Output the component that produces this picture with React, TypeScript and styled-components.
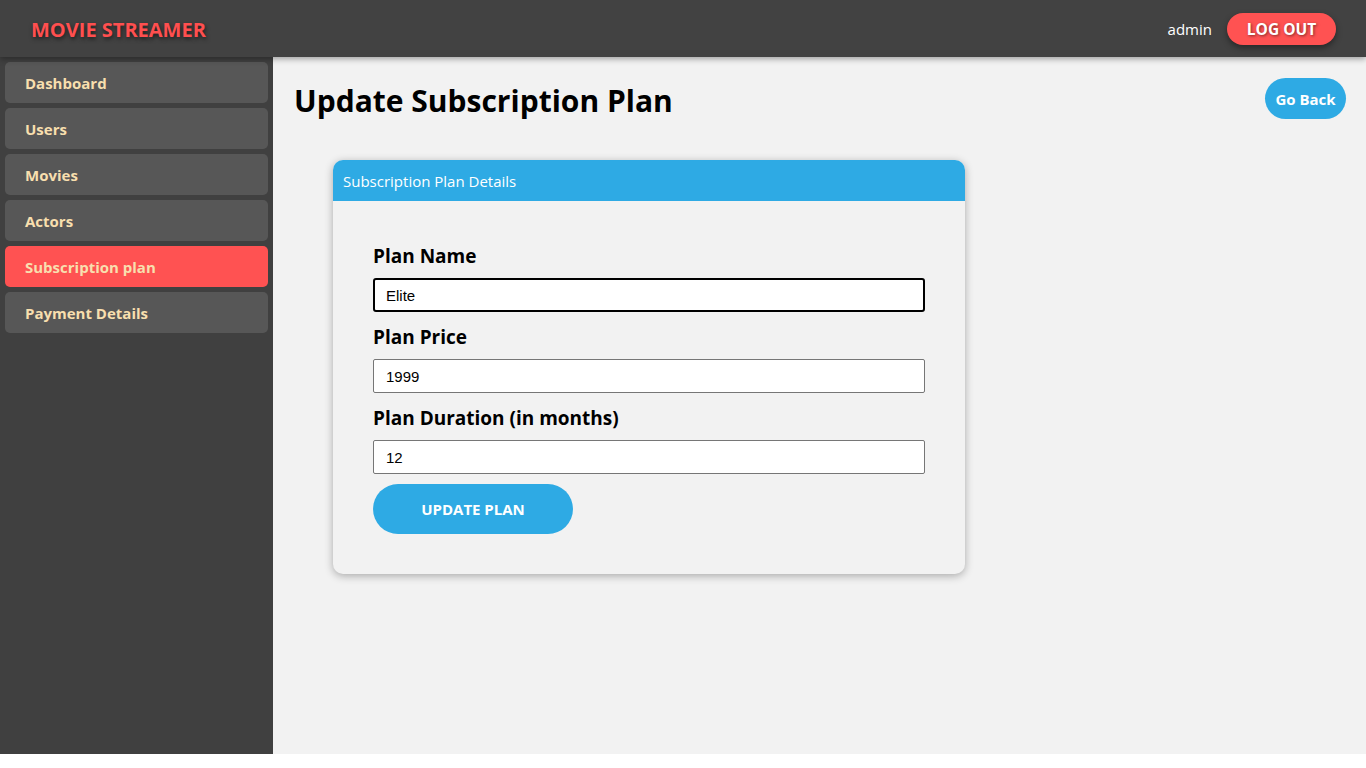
import React from "react";
import styled, { createGlobalStyle } from "styled-components";

const Global = createGlobalStyle`
  html, body { margin: 0; padding: 0; background: #ffffff; }
  body { font-family: "Open Sans", "Lato", sans-serif; }
  * { box-sizing: border-box; }
`;

const Page = styled.div`
  height: 754px;
  display: flex;
  flex-direction: column;
`;

const Header = styled.header`
  height: 57px;
  flex-shrink: 0;
  background: #424242;
  display: flex;
  align-items: center;
  justify-content: space-between;
  padding: 0 30px 0 31px;
  box-shadow: 0 2px 6px rgba(0, 0, 0, 0.35);
  position: relative;
  z-index: 2;
`;

const Logo = styled.div`
  color: #ff4f4f;
  font-weight: 700;
  font-size: 20px;
  padding-top: 2px;
  text-shadow: 1px 2px 4px rgba(0, 0, 0, 0.6);
`;

const HeaderRight = styled.div`
  display: flex;
  align-items: center;
  gap: 15px;
`;

const UserName = styled.span`
  color: #ffffff;
  font-size: 15px;
`;

const LogoutButton = styled.button`
  width: 109px;
  height: 32px;
  border: none;
  border-radius: 16px;
  background: #ff5252;
  color: #ffffff;
  font-family: inherit;
  font-weight: 700;
  font-size: 15.5px;
  text-shadow: 1px 1px 3px rgba(0, 0, 0, 0.5);
  box-shadow: 0 3px 6px rgba(0, 0, 0, 0.4);
`;

const Body = styled.div`
  flex: 1;
  display: flex;
  min-height: 0;
`;

const Sidebar = styled.nav`
  width: 273px;
  flex-shrink: 0;
  background: #404040;
  padding: 5px 5px;
  display: flex;
  flex-direction: column;
  gap: 5px;
`;

const NavItem = styled.div<{ $active?: boolean }>`
  height: 41px;
  border-radius: 5px;
  background: ${(p) => (p.$active ? "#ff5252" : "#575757")};
  color: #f8dfae;
  font-weight: 700;
  font-size: 15px;
  display: flex;
  align-items: center;
  padding-left: 20px;
`;

const Main = styled.main`
  flex: 1;
  background: #f2f2f2;
  padding: 21px 20px 0 21px;
`;

const TitleRow = styled.div`
  display: flex;
  justify-content: space-between;
  align-items: flex-start;
`;

const Title = styled.h1`
  margin: 0;
  padding-top: 2px;
  line-height: 41px;
  font-size: 30px;
  font-weight: 700;
  color: #000000;
`;

const BackButton = styled.button`
  height: 41px;
  width: 81px;
  border: none;
  border-radius: 21px;
  background: #2eaae4;
  color: #ffffff;
  font-family: inherit;
  font-weight: 700;
  font-size: 15px;
`;

const Card = styled.section`
  margin: 39px 0 0 39px;
  width: 632px;
  border-radius: 10px;
  background: #f2f2f2;
  box-shadow: 0 2px 8px rgba(0, 0, 0, 0.3);
  overflow: hidden;
`;

const CardHeader = styled.div`
  height: 41px;
  background: #2eaae4;
  color: #ffffff;
  font-size: 15px;
  display: flex;
  align-items: center;
  padding-left: 10px;
`;

const Form = styled.form`
  padding: 42px 40px 40px 40px;
  display: flex;
  flex-direction: column;
`;

const Label = styled.label`
  font-size: 19px;
  font-weight: 700;
  color: #000000;
  line-height: 27px;
  margin-bottom: 8px;
`;

const Input = styled.input<{ $focused?: boolean }>`
  width: 552px;
  height: 34px;
  font-family: "Liberation Sans", Arial, sans-serif;
  font-size: 15px;
  padding: 0 12px;
  background: #ffffff;
  color: #000000;
  border: ${(p) => (p.$focused ? "2px solid #000000" : "1px solid #767676")};
  border-radius: ${(p) => (p.$focused ? "3px" : "2px")};
  padding-left: ${(p) => (p.$focused ? "11px" : "12px")};
  margin-bottom: 12px;
  outline: none;
`;

const SubmitButton = styled.button`
  margin-top: -2px;
  width: 200px;
  height: 50px;
  border: none;
  border-radius: 25px;
  background: #2eaae4;
  color: #ffffff;
  font-family: inherit;
  font-weight: 700;
  font-size: 15px;
`;

const navItems = [
  "Dashboard",
  "Users",
  "Movies",
  "Actors",
  "Subscription plan",
  "Payment Details",
];

export default function App() {
  return (
    <>
      <Global />
      <Page>
        <Header>
          <Logo>MOVIE STREAMER</Logo>
          <HeaderRight>
            <UserName>admin</UserName>
            <LogoutButton>LOG OUT</LogoutButton>
          </HeaderRight>
        </Header>
        <Body>
          <Sidebar>
            {navItems.map((n) => (
              <NavItem key={n} $active={n === "Subscription plan"}>
                {n}
              </NavItem>
            ))}
          </Sidebar>
          <Main>
            <TitleRow>
              <Title>Update Subscription Plan</Title>
              <BackButton>Go Back</BackButton>
            </TitleRow>
            <Card>
              <CardHeader>Subscription Plan Details</CardHeader>
              <Form onSubmit={(e) => e.preventDefault()}>
                <Label>Plan Name</Label>
                <Input $focused defaultValue="Elite" />
                <Label>Plan Price</Label>
                <Input defaultValue="1999" />
                <Label>Plan Duration (in months)</Label>
                <Input defaultValue="12" />
                <SubmitButton>UPDATE PLAN</SubmitButton>
              </Form>
            </Card>
          </Main>
        </Body>
      </Page>
    </>
  );
}
